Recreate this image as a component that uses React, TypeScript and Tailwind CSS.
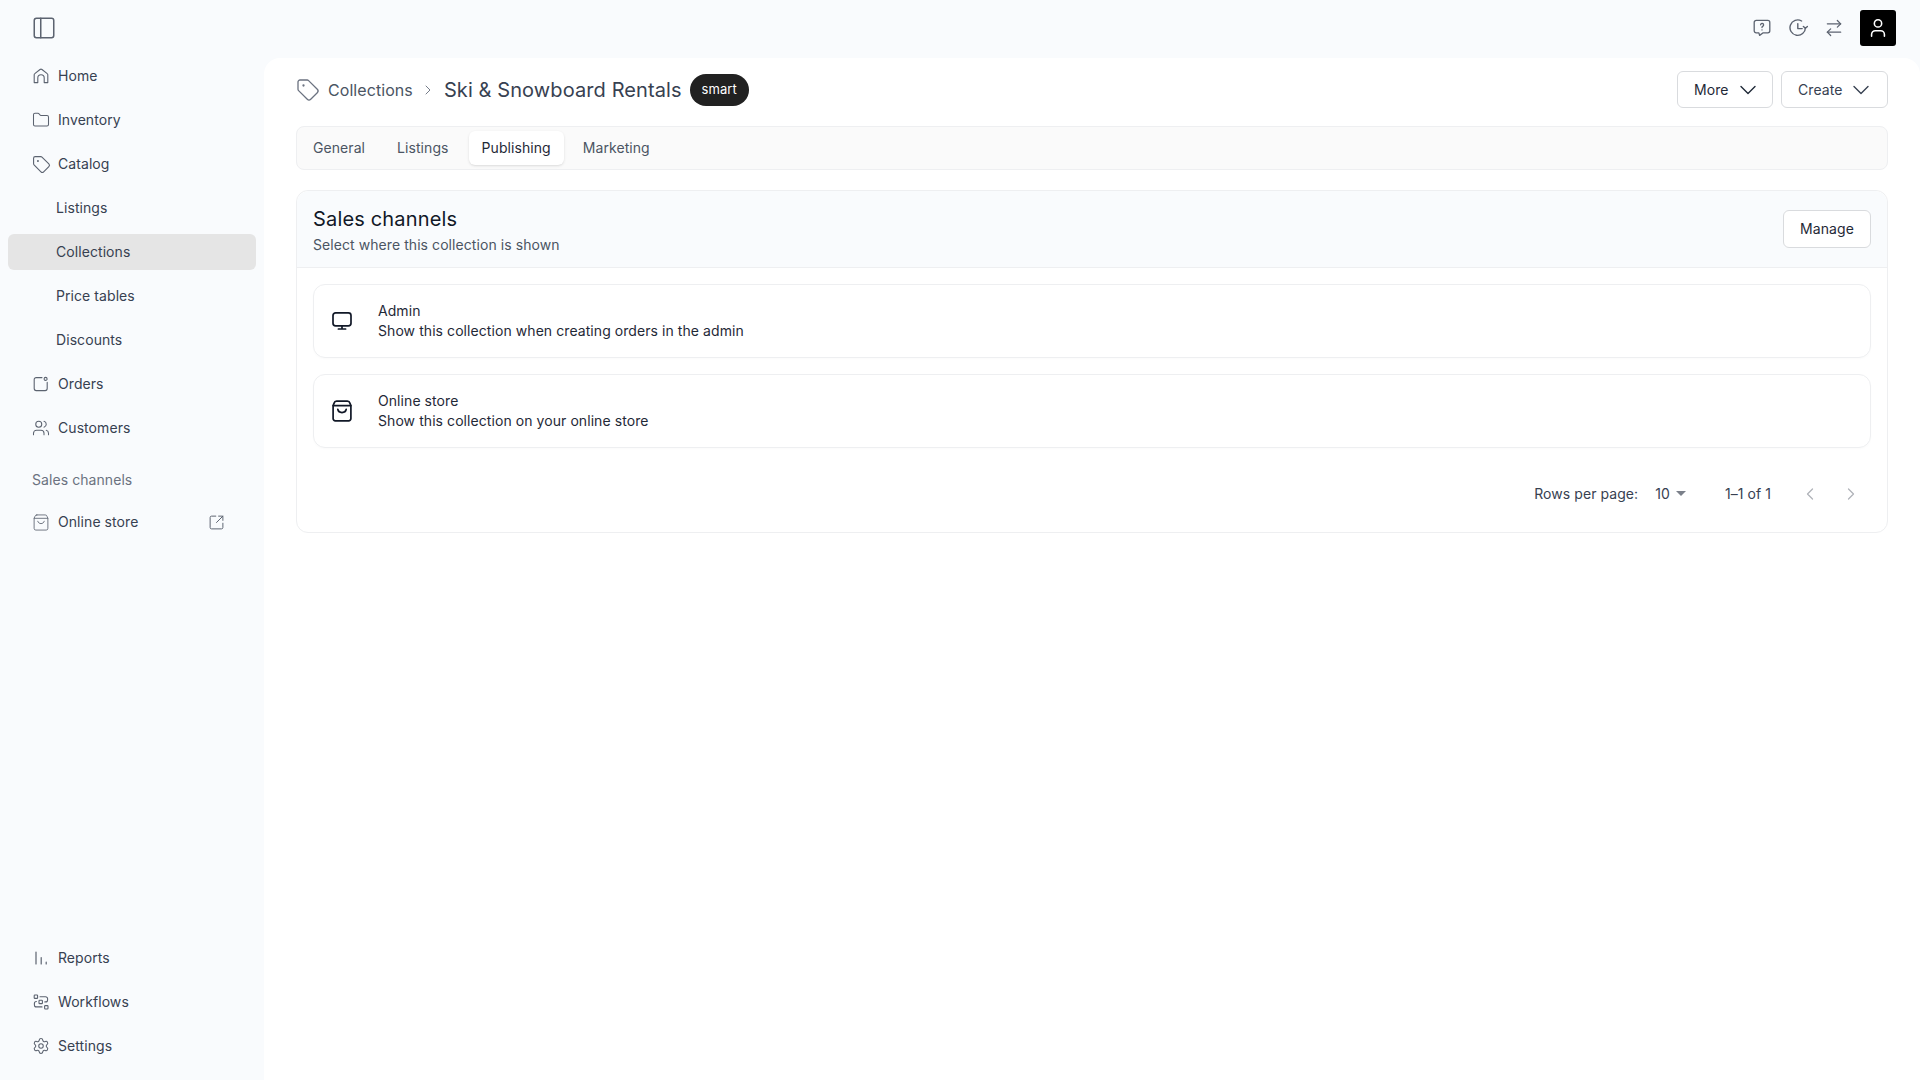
import { ChevronDown, ChevronLeft, ChevronRight, Folder, PanelLeft, Settings, SquareArrowOutUpRight, Tag, Users, ArrowRightLeft, User } from "lucide-react";
import type { ReactNode } from "react";

function HomeIcon() {
  return (
    <svg width="16" height="16" viewBox="0 0 16 16" fill="none" stroke="currentColor" strokeWidth="1.1" strokeLinejoin="round">
      <path d="M1.2 14.6V6.8a1.5 1.5 0 0 1 .6-1.2L7 1.5a1.6 1.6 0 0 1 2 0l5.2 4.1a1.5 1.5 0 0 1 .6 1.2v7.8h-3.6V10a3.2 3.2 0 0 0-6.4 0v4.6Z" />
    </svg>
  );
}

function OrdersIcon() {
  return (
    <svg width="16" height="16" viewBox="0 0 16 16" fill="none" stroke="currentColor" strokeWidth="1.1" strokeLinecap="round">
      <path d="M9 1.6H3.2A2 2 0 0 0 1.2 3.6v9a2 2 0 0 0 2 2h9a2 2 0 0 0 2-2V6.4" />
      <circle cx="12.6" cy="2.9" r="1.5" />
    </svg>
  );
}

function BagIcon({ w = 16, h = 17, width = 1.1 }: { w?: number; h?: number; width?: number }) {
  return (
    <svg width={w} height={h} viewBox="0 0 20 22" fill="none" stroke="currentColor" strokeWidth={width} strokeLinecap="round" strokeLinejoin="round">
      <path d="M4.6 1.2h10.8a2.6 2.6 0 0 1 2.5 2l1 2.4v13a2.2 2.2 0 0 1-2.2 2.2H3.3a2.2 2.2 0 0 1-2.2-2.2v-13l1-2.4a2.6 2.6 0 0 1 2.5-2Z" />
      <path d="M1.2 5.6h17.6" />
      <path d="M5.8 9.4c.8 4.2 7.6 4.2 8.4 0" />
    </svg>
  );
}

function ReportsIcon() {
  return (
    <svg width="16" height="16" viewBox="0 0 16 16" fill="none" stroke="currentColor" strokeWidth="1.2" strokeLinecap="round">
      <path d="M3 2v12M8.2 7.5V14M13.2 12.2V14" />
    </svg>
  );
}

function WorkflowsIcon() {
  return (
    <svg width="16" height="16" viewBox="0 0 16 16" fill="none" stroke="currentColor" strokeWidth="1.1" strokeLinecap="round">
      <rect x="1.2" y="1" width="3.4" height="3.4" rx=".7" />
      <rect x="6" y="6.2" width="3.4" height="3.4" rx=".7" />
      <rect x="11.6" y="11.6" width="3.4" height="3.4" rx=".7" />
      <path d="M7 2.7h5.6a2 2 0 0 1 2 2v1.2a2 2 0 0 1-2 2h-.8" />
      <path d="M3.4 7.5A2 2 0 0 0 1.4 9.5v1.4a2 2 0 0 0 2 2H9" />
    </svg>
  );
}

function HelpIcon() {
  return (
    <svg width="18" height="18" viewBox="0 0 18 18" fill="none" stroke="currentColor" strokeWidth="1.3" strokeLinecap="round" strokeLinejoin="round">
      <path d="M3.2 1.4h11.6a2 2 0 0 1 2 2v8.4a2 2 0 0 1-2 2h-4.6l-3.6 2.6-.7-2.6H3.2a2 2 0 0 1-2-2V3.4a2 2 0 0 1 2-2Z" />
      <path d="M7.6 5.8a1.5 1.5 0 1 1 2.3 1.4c-.6.3-.9.7-.9 1.3" />
      <path d="M9 10.8v.1" />
    </svg>
  );
}

function HistoryIcon() {
  return (
    <svg width="19" height="18" viewBox="0 0 19 18" fill="none" stroke="currentColor" strokeWidth="1.4" strokeLinecap="round" strokeLinejoin="round">
      <path d="M16.4 8.6A7.7 7.7 0 1 1 12.6 2" />
      <path d="M8.8 4.6V9.6h4.4" />
      <path d="M14.4 7.4l2 1.9 2-1.9" />
    </svg>
  );
}

function MonitorIcon() {
  return (
    <svg width="20" height="20" viewBox="0 0 20 20" fill="none" stroke="currentColor" strokeWidth="1.7" strokeLinecap="round" strokeLinejoin="round">
      <rect x="1" y="1.8" width="18" height="13" rx="2.6" />
      <path d="M10 15v3M6.4 18h7.2" />
    </svg>
  );
}

function NavItem({ icon, label, sub, active, right }: { icon?: ReactNode; label: string; sub?: boolean; active?: boolean; right?: ReactNode }) {
  return (
    <div className={`mx-2 flex h-9 items-center rounded-md text-sm text-[#374151] ${active ? "bg-[#e5e5e5]" : ""} ${sub ? "pl-12" : "pl-[25px]"}`}>
      {icon && <span className="mr-[9px] flex w-4 justify-center text-[#5c6370]">{icon}</span>}
      <span>{label}</span>
      {right && <span className="ml-auto mr-[31px] text-[#5c6370]">{right}</span>}
    </div>
  );
}

export default function App() {
  return (
    <div className="flex h-screen w-full overflow-hidden bg-[#f9fbfd] font-['Inter',sans-serif] tracking-[0.07px]">
      <aside className="flex w-[264px] shrink-0 flex-col pb-4">
        <div className="flex h-[58px] shrink-0 items-start pl-[31px] pt-[15px] text-[#5c6370]">
          <PanelLeft size={26} strokeWidth={1.4} />
        </div>
        <nav className="flex flex-col gap-2">
          <NavItem icon={<HomeIcon />} label="Home" />
          <NavItem icon={<Folder size={18} strokeWidth={1.4} className="shrink-0" />} label="Inventory" />
          <NavItem icon={<Tag size={19} strokeWidth={1.4} className="shrink-0" />} label="Catalog" />
          <NavItem sub label="Listings" />
          <NavItem sub active label="Collections" />
          <NavItem sub label="Price tables" />
          <NavItem sub label="Discounts" />
          <NavItem icon={<OrdersIcon />} label="Orders" />
          <NavItem icon={<Users size={18} strokeWidth={1.4} className="shrink-0" />} label="Customers" />
        </nav>
        <div className="mb-[14px] mt-6 pl-8 text-sm leading-5 text-[#6b7280]">Sales channels</div>
        <NavItem icon={<BagIcon />} label="Online store" right={<SquareArrowOutUpRight size={17} strokeWidth={1.4} />} />
        <div className="mt-auto flex flex-col gap-2">
          <NavItem icon={<ReportsIcon />} label="Reports" />
          <NavItem icon={<WorkflowsIcon />} label="Workflows" />
          <NavItem icon={<Settings size={18} strokeWidth={1.4} className="shrink-0" />} label="Settings" />
        </div>
      </aside>

      <div className="flex min-w-0 flex-1 flex-col">
        <header className="flex h-[58px] shrink-0 items-center justify-end pb-[2px] pr-6 text-[#5c6370]">
          <span className="mr-[18px]"><HelpIcon /></span>
          <span className="mr-4"><HistoryIcon /></span>
          <span className="mr-4"><ArrowRightLeft size={20} strokeWidth={1.5} /></span>
          <span className="flex h-9 w-9 items-center justify-center rounded-[3px] bg-black text-white">
            <User size={22} strokeWidth={1.7} />
          </span>
        </header>

        <main className="flex-1 rounded-t-2xl bg-white px-8 pt-[13px]">
          <div className="flex h-[37px] items-center">
            <span className="mr-2 text-[#6b7280]"><Tag size={24} strokeWidth={1.3} /></span>
            <span className="text-base text-[#4b5563]">Collections</span>
            <ChevronRight size={16} strokeWidth={1.4} className="ml-[7px] mr-2 text-[#6b7280]" />
            <h1 className="text-xl leading-7 tracking-[0.1px] text-[#374151]">Ski &amp; Snowboard Rentals</h1>
            <span className="ml-2 flex h-8 w-[59px] items-center justify-center rounded-full bg-[#212121] text-[13px] text-white">smart</span>
            <button className="ml-auto flex h-[37px] w-[96px] items-center gap-[5px] rounded-md border border-[#d9dbde] pl-4 text-sm text-[#1f2937]">
              More <ChevronDown size={28} strokeWidth={1.2} className="shrink-0" />
            </button>
            <button className="ml-2 flex h-[37px] w-[107px] items-center gap-[5px] rounded-md border border-[#d9dbde] pl-4 text-sm text-[#374151]">
              Create <ChevronDown size={28} strokeWidth={1.2} className="shrink-0" />
            </button>
          </div>

          <div className="mt-[18px] flex h-[44px] items-center gap-[7px] rounded-lg border border-[#eeeff1] bg-[#fafafa] px-1 pb-[1px] text-sm text-[#4b5563]">
            <span className="px-3">General</span>
            <span className="ml-[1px] mr-[1px] px-3">Listings</span>
            <span className="rounded-md bg-white px-[13px] py-[7px] text-[#1f2937] shadow-sm">Publishing</span>
            <span className="px-3">Marketing</span>
          </div>

          <section className="mt-5 rounded-xl border border-[#eeeff1]">
            <div className="flex h-[77px] items-center justify-between rounded-t-xl border-b border-[#eeeff1] bg-[#f9fbfd] px-4">
              <div className="pt-[2px]">
                <h2 className="text-xl leading-7 tracking-[0.17px] text-[#111827]">Sales channels</h2>
                <p className="mt-[2px] text-sm leading-5 text-[#4b5563]">Select where this collection is shown</p>
              </div>
              <button className="h-[38px] w-[88px] rounded-md border border-[#d9dbde] bg-white text-sm text-[#1f2937]">Manage</button>
            </div>
            <div className="flex flex-col gap-4 px-4 pt-4">
              <div className="flex h-[74px] items-center rounded-xl border border-[#eeeff1] pl-[18px] shadow-[0_1px_2px_rgba(0,0,0,0.02)]">
                <span className="mr-[26px] text-[#111827]"><MonitorIcon /></span>
                <div className="text-sm leading-5 text-[#1f2937]">
                  <div>Admin</div>
                  <div>Show this collection when creating orders in the admin</div>
                </div>
              </div>
              <div className="flex h-[74px] items-center rounded-xl border border-[#eeeff1] pl-[18px] shadow-[0_1px_2px_rgba(0,0,0,0.02)]">
                <span className="mr-[26px] text-[#111827]"><BagIcon w={20} h={22} width={1.7} /></span>
                <div className="text-sm leading-5 text-[#1f2937]">
                  <div>Online store</div>
                  <div>Show this collection on your online store</div>
                </div>
              </div>
            </div>
            <div className="flex h-[84px] items-center justify-end pr-[26px] pt-[7px] text-sm text-[#374151]">
              <span>Rows per page:</span>
              <span className="ml-[17px]">10</span>
              <svg width="10" height="5" viewBox="0 0 12 6" className="ml-[6px] text-[#7b808a]" fill="currentColor"><path d="M0 0h12L6 6Z" /></svg>
              <span className="ml-[39px]">1–1 of 1</span>
              <ChevronLeft size={20} strokeWidth={1.5} className="ml-[29px] text-[#b0b3b9]" />
              <ChevronRight size={20} strokeWidth={1.5} className="ml-[21px] text-[#b0b3b9]" />
            </div>
          </section>
        </main>
      </div>
    </div>
  );
}
